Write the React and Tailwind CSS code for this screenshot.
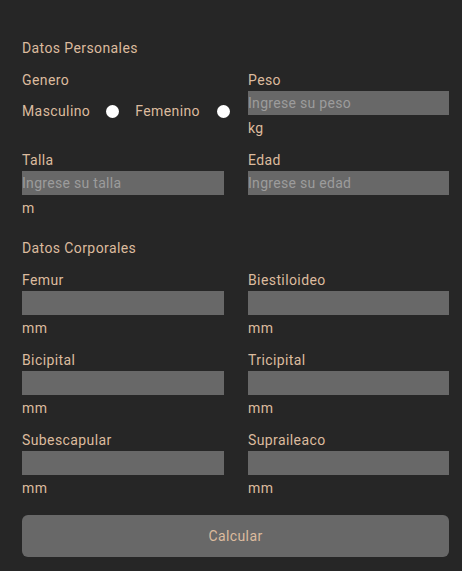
import React from 'react';

const Field = ({ label, placeholder = '', unit }) => (
  <div className="flex flex-col">
    <label className="h-5 leading-5 text-[#dcbb9e]">{label}</label>
    <input
      type="text"
      placeholder={placeholder}
      className="mt-px h-6 w-full bg-[#686868] text-[14px] tracking-[0.3px] text-[#a0a0a0] placeholder:text-[#9c9c9c] outline-none px-0"
    />
    {unit && <span className="mt-[3px] h-5 leading-5 text-[#dcbb9e]">{unit}</span>}
  </div>
);

const Radio = () => (
  <span className="inline-block h-[13px] w-[13px] rounded-full bg-white" />
);

export default function App() {
  return (
    <div
      className="min-h-[571px] bg-[#262626] pt-[38px] pl-[22px] pr-[13px] text-[14px] tracking-[0.4px] text-[#dcbb9e]"
      style={{ fontFamily: 'Roboto, "Noto Sans", sans-serif' }}
    >
      <h2 className="h-5 leading-5">Datos Personales</h2>

      <div className="mt-[12px] grid grid-cols-[202px_1fr] gap-x-6 gap-y-3">
        <div className="flex flex-col">
          <span className="h-5 leading-5">Genero</span>
          <div className="mt-[11px] flex h-5 items-center">
            <span className="leading-5">Masculino</span>
            <span className="ml-[16px] flex"><Radio /></span>
            <span className="ml-[16px] leading-5">Femenino</span>
            <span className="ml-[17px] flex"><Radio /></span>
          </div>
        </div>
        <Field label="Peso" placeholder="Ingrese su peso" unit="kg" />
        <Field label="Talla" placeholder="Ingrese su talla" unit="m" />
        <Field label="Edad" placeholder="Ingrese su edad" />
      </div>

      <h2 className="mt-5 h-5 leading-5">Datos Corporales</h2>

      <div className="mt-3 grid grid-cols-[202px_1fr] gap-x-6 gap-y-3">
        <Field label="Femur" unit="mm" />
        <Field label="Biestiloideo" unit="mm" />
        <Field label="Bicipital" unit="mm" />
        <Field label="Tricipital" unit="mm" />
        <Field label="Subescapular" unit="mm" />
        <Field label="Supraileaco" unit="mm" />
      </div>

      <button className="mt-[17px] h-[42px] w-full rounded-md bg-[#686868] text-[#dcbb9e]">
        Calcular
      </button>
    </div>
  );
}
